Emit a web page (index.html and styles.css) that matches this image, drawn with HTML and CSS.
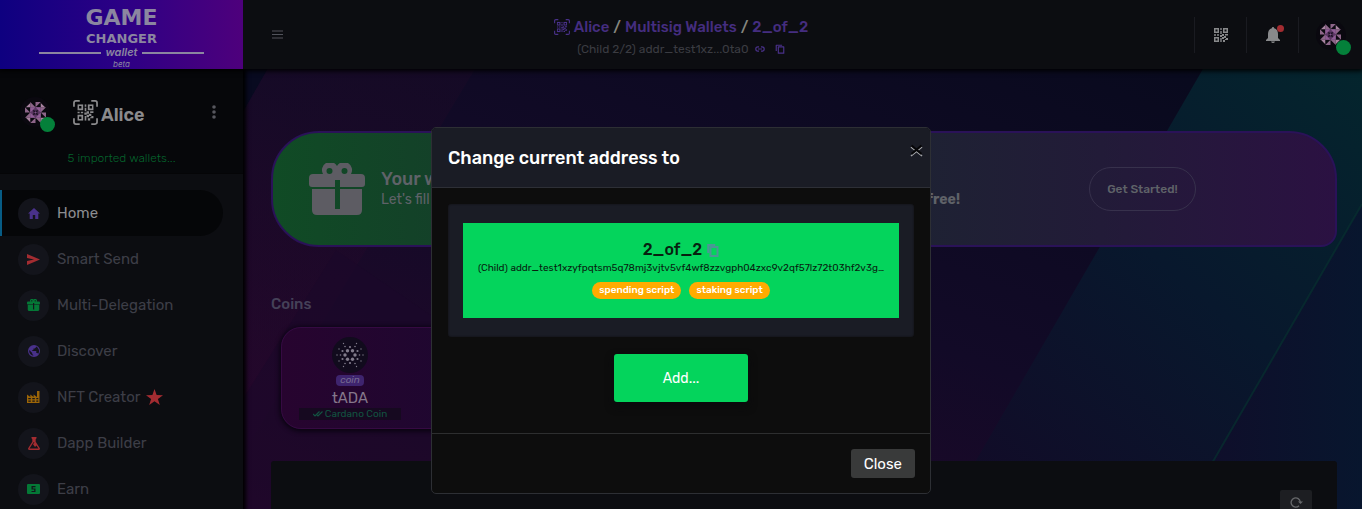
FILE: index.html
```html
<!DOCTYPE html>
<html lang="en">
<head>
<meta charset="utf-8">
<title>GameChanger Wallet</title>
<link rel="stylesheet" href="styles.css">
</head>
<body>
<svg class="defs" aria-hidden="true">
  <symbol id="qr" viewBox="0 0 14 14">
    <path fill-rule="evenodd" d="M0 0h5v5H0zM1.500 1.500v2h2v-2zM9 0h5v5H9zM10.500 1.500v2h2v-2zM0 9h5v5H0zM1.500 10.500v2h2v-2zM6.300 0h1.400v2H6.300zM6.300 3h1.400v3H6.300zM0 6.300h2v1.400H0zM3 6.300h2v1.400H3zM6 7h2v2H6zM8 6h2v2H8zM11 6h3v1.500h-3zM10 8h2v2h-2zM12 10h2v2h-2zM8 9h2v2H8zM6.300 10h1.400v4H6.300zM9 12h2v2H9zM11 11h1v1h-1z"/>
  </symbol>
  <symbol id="scan" viewBox="0 0 26 26">
    <path d="M1 7V3q0-2 2-2h4M19 1h4q2 0 2 2v4M25 19v4q0 2-2 2h-4M7 25H3q-2 0-2-2v-4" fill="none" stroke="currentColor" stroke-width="1.800"/>
    <use href="#qr" x="4.500" y="4.500" width="17" height="17"/>
  </symbol>
  <symbol id="avatar" viewBox="0 0 24 24">
    <path fill="#5b3763" d="M6 6h12v12H6z"/>
    <path fill="#8d6589" d="M6 0l6 6H6zM12 0h6l-6 6zM24 6l-6 6V6zM24 12v6l-6-6zM18 24l-6-6h6zM12 24H6l6-6zM0 18l6-6v6zM0 12V6l6 6z"/>
    <path fill="#a883a0" d="M6 6V1L1 6zM18 6h5l-5-5zM18 18v5l5-5zM6 18H1l5 5z"/>
    <path fill="#8f5d95" d="M6 6h6l-6 6zM18 6v6l-6-6zM18 18h-6l6-6zM6 18v-6l6 6z"/>
    <path fill="#1b1023" d="M9 9l3 1 3-1-1 3 1 3-3-1-3 1 1-3z"/>
    <path fill="#80558a" d="M12 10.500l1.500 1.500-1.500 1.500-1.500-1.500z"/>
  </symbol>
  <symbol id="gift" viewBox="0 0 56 52">
    <path fill-rule="evenodd" d="M4 11h10a8 8 0 0 1 14-8 8 8 0 0 1 14 8h10q4 0 4 4v6q0 3-3 3H31v-7h-5v7H3q-3 0-3-3v-6q0-4 4-4zM20.500 5a3 3 0 1 0 0 6 3 3 0 0 0 0-6zM35.500 5a3 3 0 1 0 0 6 3 3 0 0 0 0-6z"/>
    <path d="M3 26h23v20h5V26h22v21q0 5-5 5H8q-5 0-5-5z"/>
  </symbol>
  <symbol id="copy" viewBox="0 0 12 12">
    <path d="M4 3.500h6.500V11H4zM1.500 8.500v-7h7" fill="none" stroke="currentColor" stroke-width="1.400" stroke-linejoin="round"/>
  </symbol>
</svg>

<header class="topbar">
  <div class="topbar-left">
    <a class="brand" href="#" aria-label="GameChanger wallet beta">
      <span class="brand-game">GAME</span>
      <span class="brand-changer">CHANGER</span>
      <span class="brand-wallet">wallet</span>
      <span class="brand-beta">beta</span>
    </a>
    <button class="plain menu" aria-label="Toggle menu"><svg width="11" height="9" viewBox="0 0 11 9"><path d="M0 1h11M0 4.500h11M0 8h11" stroke="currentColor"/></svg></button>
  </div>
  <div class="crumbs">
    <div class="crumb-line">
      <svg class="violet" width="16" height="16"><use href="#scan"/></svg>
      <a href="#">Alice</a><span>/</span><a href="#">Multisig Wallets</a><span>/</span><a href="#">2_of_2</a>
    </div>
    <div class="crumb-sub">(Child 2/2) addr_test1xz...0ta0
      <svg class="violet" width="10" height="6" viewBox="0 0 10 6"><path d="M4 .8H3a2.200 2.200 0 0 0 0 4.400h1M6 .8h1a2.200 2.200 0 0 1 0 4.400H6M3 3h4" fill="none" stroke="currentColor" stroke-width="1.200"/></svg>
      <button class="plain violet" aria-label="Copy address"><svg width="10" height="10"><use href="#copy"/></svg></button>
    </div>
  </div>
  <div class="tools">
    <button class="plain tool" aria-label="Scan QR"><svg width="14" height="14"><use href="#qr"/></svg></button>
    <button class="plain tool" aria-label="Notifications"><span class="bell"><svg width="14" height="16" viewBox="0 0 14 16"><path d="M7 0q1.200 0 1.200 1.300Q12 2.500 12 7v4l2 2v1H0v-1l2-2V7q0-4.500 3.800-5.700Q5.800 0 7 0zM5 14.500h4Q8.500 16 7 16t-2-1.500z"/></svg><i class="alert"></i></span></button>
    <button class="plain tool tool-user" aria-label="Account"><span class="avatar"><svg width="21" height="21"><use href="#avatar"/></svg><i class="online"></i></span></button>
  </div>
</header>

<div class="shell">
  <aside class="sidebar">
    <section class="profile">
      <div class="profile-row">
        <span class="avatar"><svg width="21" height="21"><use href="#avatar"/></svg><i class="online"></i></span>
        <h2><svg width="25" height="25"><use href="#scan"/></svg><span>Alice</span></h2>
        <button class="plain more" aria-label="More"><svg width="4" height="14" viewBox="0 0 4 14"><circle cx="2" cy="2" r="1.800"/><circle cx="2" cy="7" r="1.800"/><circle cx="2" cy="12" r="1.800"/></svg></button>
      </div>
      <a class="imported" href="#">5 imported wallets...</a>
    </section>
    <nav>
      <a class="item active" href="#"><span class="dot violet"><svg width="12" height="11" viewBox="0 0 12 11"><path d="M6 0l6 5.500h-1.700V11H7.200V7H4.800v4H1.700V5.500H0z"/></svg></span>Home</a>
      <a class="item" href="#"><span class="dot red"><svg width="13" height="11" viewBox="0 0 13 11"><path d="M0 0l13 5.500L0 11V7l7-1.500L0 4z"/></svg></span>Smart Send</a>
      <a class="item" href="#"><span class="dot green"><svg width="13" height="12"><use href="#gift"/></svg></span>Multi-Delegation</a>
      <a class="item" href="#"><span class="dot violet"><svg width="12" height="12" viewBox="0 0 12 12"><path fill-rule="evenodd" d="M6 0a6 6 0 1 1 0 12A6 6 0 0 1 6 0zM1.300 5l2.900 3v1l1 1v.8A5 5 0 0 1 1.300 5zM8 1.500v.8L6.800 3.500H5.500v1.200L4.300 5v1h4v2h1.200l.6 1A5 5 0 0 0 8 1.500z"/></svg></span>Discover</a>
      <a class="item" href="#"><span class="dot amber"><svg width="13" height="12" viewBox="0 0 13 12"><path fill-rule="evenodd" d="M0 3.500L3.300 6V3.500L6.600 6V3.500L10 6V0h2.500v12H0zM1.300 7v1.200h2.500V7zm4 0v1.200h2.500V7zm4 0v1.200h2V7zm-8 2.500v1.200h2.500V9.500zm4 0v1.200h2.500V9.500zm4 0v1.200h2V9.500z"/></svg></span>NFT Creator<svg class="star" width="17" height="16" viewBox="0 0 16 15"><path d="M8 0l2 5.600 6 .2-4.800 3.600L13 15l-5-3.400L3 15l1.800-5.600L0 5.800l6-.2z"/></svg></a>
      <a class="item" href="#"><span class="dot red"><svg width="12" height="13" viewBox="0 0 12 13"><path fill-rule="evenodd" d="M3.500 0h5v1.300l-.8 1v2.500L12 11.500q0 1.500-1.500 1.500h-9Q0 13 0 11.500l4.300-6.700V2.300l-.8-1zM5.500 5.200L1.500 11.600h9l-2-3.200L7 10 5 7.300l1.500-2z"/></svg></span>Dapp Builder</a>
      <a class="item" href="#"><span class="dot green"><svg width="13" height="10" viewBox="0 0 13 10"><path fill-rule="evenodd" d="M1 0h11q1 0 1 1v8q0 1-1 1H1Q0 10 0 9V1q0-1 1-1zM4.500 2v3.500h2.700V7H4.500v1h4V4.600H5.800V3.200h2.700V2z"/></svg></span>Earn</a>
    </nav>
  </aside>

  <main>
    <svg class="backdrop" viewBox="0 0 1119 440" preserveAspectRatio="xMaxYMin slice" aria-hidden="true">
      <defs>
        <linearGradient id="base" x1="1" y1="0" x2="0" y2="1"><stop offset="0" stop-color="#070a1c"/><stop offset=".5" stop-color="#120a27"/><stop offset="1" stop-color="#27072b"/></linearGradient>
        <linearGradient id="teal" x1="1" y1="0" x2=".2" y2="1"><stop offset="0" stop-color="#04252d"/><stop offset=".5" stop-color="#08182d"/><stop offset="1" stop-color="#110c28"/></linearGradient>
        <linearGradient id="wine" x1="0" y1="0" x2="0" y2="1"><stop offset="0" stop-color="#1a0a26"/><stop offset="1" stop-color="#29062d"/></linearGradient>
        <linearGradient id="navy" x1="0" y1="0" x2="1" y2="0"><stop offset="0" stop-color="#100d2a"/><stop offset="1" stop-color="#08162e"/></linearGradient>
      </defs>
      <rect width="1119" height="440" fill="url(#base)"/>
      <path d="M0 0h32L0 56z" fill="#080a20"/>
      <path d="M32 0h206L0 395V56z" fill="url(#wine)" opacity=".5"/>
      <path d="M100 180L0 340v100h170l90-150z" fill="#1b0929" opacity=".6"/>
      <path d="M961 0h158v440H706z" fill="url(#teal)"/>
      <path d="M1119 134v306H942z" fill="url(#navy)"/>
      <path d="M1119 134L942 440" stroke="#07302f" stroke-width="2" opacity=".7"/>
    </svg>
    <div class="content">
      <section class="banner">
        <svg class="banner-gift" width="56" height="52"><use href="#gift"/></svg>
        <div class="banner-text">
          <h3>Your wallet is empty!</h3>
          <p><span>Let's fill it with some test coins, you can get them</span><b>for free!</b></p>
        </div>
        <button class="started">Get Started!</button>
      </section>
      <h4>Coins</h4>
      <section class="coins">
        <div class="coin">
          <span class="coin-logo"><svg width="28" height="28" viewBox="-14 -14 28 28">
            <g><circle cx="5" cy="0" r="1.700"/><circle cx="2.500" cy="4.300" r="1.700"/><circle cx="-2.500" cy="4.300" r="1.700"/><circle cx="-5" cy="0" r="1.700"/><circle cx="-2.500" cy="-4.300" r="1.700"/><circle cx="2.500" cy="-4.300" r="1.700"/></g>
            <g><circle cx="7.500" cy="4" r="1.100"/><circle cx="0" cy="8" r="1.100"/><circle cx="-7.500" cy="4" r="1.100"/><circle cx="-7.500" cy="-4" r="1.100"/><circle cx="0" cy="-8" r="1.100"/><circle cx="7.500" cy="-4" r="1.100"/><circle cx="9.500" cy="0" r=".8"/><circle cx="-9.500" cy="0" r=".8"/><circle cx="5" cy="8.500" r=".8"/><circle cx="-5" cy="8.500" r=".8"/><circle cx="5" cy="-8.500" r=".8"/><circle cx="-5" cy="-8.500" r=".8"/><circle cx="13" cy="0" r=".7"/><circle cx="-13" cy="0" r=".7"/><circle cx="6.500" cy="11.500" r=".7"/><circle cx="-6.500" cy="11.500" r=".7"/><circle cx="6.500" cy="-11.500" r=".7"/><circle cx="-6.500" cy="-11.500" r=".7"/><circle cx="11" cy="6" r=".7"/><circle cx="-11" cy="6" r=".7"/><circle cx="11" cy="-6" r=".7"/><circle cx="-11" cy="-6" r=".7"/></g>
          </svg></span>
          <span class="coin-tag">coin</span>
          <span class="coin-name">tADA</span>
          <span class="coin-kind"><svg width="10" height="6" viewBox="0 0 10 6"><path d="M0 3l2 2 4.500-4.500M4 4l1 1L9.500.5" fill="none" stroke="currentColor" stroke-width="1.200"/></svg>Cardano Coin</span>
        </div>
      </section>
      <section class="panel">
        <button class="refresh" aria-label="Refresh"><svg width="13" height="12" viewBox="0 0 13 12"><path d="M9 9.700A4.600 4.600 0 1 1 10.300 6" fill="none" stroke="currentColor" stroke-width="1.300"/><path d="M8 5.500h5L10.500 8z" fill="currentColor"/></svg></button>
      </section>
    </div>
  </main>
</div>

<div class="overlay">
  <section class="modal" role="dialog" aria-modal="true" aria-labelledby="modal-title">
    <header class="modal-head">
      <h1 id="modal-title">Change current address to</h1>
      <button class="plain dismiss" aria-label="Dismiss"><svg width="13" height="13" viewBox="0 0 13 13"><path d="M1 3l11 9M12 3l-11 9" stroke="#a3a4a8" stroke-width="1.600"/><path d="M1.500 1.500l10 8.500M11.500 1.500l-10 8.500" stroke="#050507" stroke-width="2.200"/></svg></button>
    </header>
    <div class="modal-body">
      <div class="choices">
        <button class="address">
          <span class="address-name">2_of_2 <svg width="12" height="13" viewBox="0 0 12 13"><path d="M3.500 3h7v9h-7zM1.200 9V1h7" fill="none" stroke="currentColor" stroke-width="2"/></svg></span>
          <span class="address-line">(Child) addr_test1xzyfpqtsm5q78mj3vjtv5vf4wf8zzvgph04zxc9v2qf57lz72t03hf2v3g…</span>
          <span class="badges"><span class="badge">spending script</span><span class="badge">staking script</span></span>
        </button>
      </div>
      <button class="add">Add...</button>
    </div>
    <footer class="modal-foot"><button class="close">Close</button></footer>
  </section>
</div>
</body>
</html>
```
FILE: styles.css
```css
* { box-sizing: border-box; }
body {
  margin: 0;
  height: 100vh;
  overflow: hidden;
  display: flex;
  flex-direction: column;
  background: #0c0d11;
  color: #77787c;
  font-family: Rubik, Inter, "Liberation Sans", sans-serif;
  font-size: 15px;
}
h1, h2, h3, h4, p { margin: 0; }
a { color: inherit; text-decoration: none; }
button { font: inherit; color: inherit; cursor: pointer; }
svg { display: block; fill: currentColor; flex: none; }
.defs { position: absolute; width: 0; height: 0; }
.plain { background: none; border: 0; padding: 0; }
.violet { color: #49318a; }
.red { color: #a32c31; }
.green { color: #047836; }
.amber { color: #9c6507; }

.topbar {
  position: relative;
  z-index: 2;
  flex: none;
  display: grid;
  grid-template-columns: 1fr auto 1fr;
  height: 69px;
  background: #0c0d11;
  box-shadow: 0 1px 5px 1px #000;
}
.topbar-left { display: flex; align-items: center; gap: 29px; }
.brand {
  width: 243px;
  height: 69px;
  padding: 5px 39px 0;
  display: flex;
  flex-direction: column;
  align-items: center;
  background: linear-gradient(90deg, #0e0080, #2c0085 50%, #4e007c);
  color: #8b86a0;
  font-family: "DejaVu Sans", sans-serif;
}
.brand-game { font-size: 22px; line-height: 26px; font-weight: 700; }
.brand-changer { font-size: 13px; line-height: 15px; font-weight: 700; }
.brand-wallet {
  align-self: stretch;
  display: flex;
  align-items: center;
  gap: 4px;
  font: italic 600 11px/13px Inter, sans-serif;
}
.brand-wallet::before, .brand-wallet::after { content: ""; flex: 1; height: 2px; background: currentColor; }
.brand-beta { font: italic 8px/10px Inter, sans-serif; }
.menu { color: #52535b; }

.crumbs { display: flex; flex-direction: column; align-items: center; justify-content: center; gap: 5px; padding-top: 5px; }
.crumb-line { display: flex; align-items: center; gap: 4px; font-size: 15px; line-height: 18px; font-weight: 500; }
.crumb-line a { color: #452d80; }
.crumb-line span { color: #85867f; }
.crumb-sub { display: flex; align-items: center; gap: 6px; font-size: 12px; line-height: 16px; color: #3b3c42; }
.crumb-sub button { margin-left: 4px; }
.tools { display: flex; justify-content: flex-end; align-items: center; }
.tool { width: 52px; height: 36px; display: grid; place-items: center; border-left: 1px solid #1a1b21; color: #88898b; }
.tool-user { width: 64px; }
.bell { position: relative; }
.alert { position: absolute; top: -2px; right: -4px; width: 7px; height: 7px; border-radius: 50%; background: #a32c31; }
.avatar { position: relative; width: 30px; height: 30px; display: grid; place-items: center; border-radius: 50%; background: #0a080f; }
.online { position: absolute; right: -5px; bottom: -5px; width: 15px; height: 15px; border-radius: 50%; background: #04803a; }

.shell { flex: 1; min-height: 0; display: grid; grid-template-columns: 243px 1fr; }
.sidebar { position: relative; z-index: 1; background: #0c0d11; box-shadow: 2px 0 4px 1px #000; }
.profile { height: 105px; padding-top: 26px; background: #06070a; border-bottom: 1px solid #050507; display: flex; flex-direction: column; align-items: center; }
.profile-row { align-self: stretch; display: flex; align-items: center; padding: 0 27px 0 20px; height: 34px; }
.profile-row h2 { display: flex; align-items: center; gap: 3px; margin: 0 auto 0 23px; font-size: 18px; line-height: 24px; font-weight: 600; color: #8b8b8d; }
.profile-row h2 span { padding-top: 5px; }
.more { color: #56575e; }
.imported { margin-top: 21px; font-size: 12px; line-height: 16px; font-weight: 300; color: #05632c; }
nav { padding-top: 16px; }
.item { display: flex; align-items: center; gap: 8px; width: 223px; height: 46px; padding-left: 16px; border-left: 2px solid transparent; color: #3d3e47; }
.item.active { background: #050608; border-left-color: #075c85; border-radius: 0 23px 23px 0; color: #8c8d90; }
.dot { width: 31px; height: 31px; display: grid; place-items: center; border-radius: 50%; background: #13141b; }
.star { color: #a32c31; margin-left: -3px; }

main { position: relative; min-width: 0; overflow: hidden; }
.backdrop { position: absolute; inset: 0; width: 100%; height: 100%; }
.content { position: relative; height: 100%; padding: 62px 25px 0 28px; display: flex; flex-direction: column; }
.banner {
  flex: none;
  height: 116px;
  padding: 0 139px 0 36px;
  display: flex;
  align-items: center;
  border: 2px solid #2a1258;
  border-radius: 48px 48px 16px 48px;
  background: linear-gradient(90deg, #104b25, #1e2233 60%, #221b38 78%, #2b1142);
  color: #5f6268;
}
.banner-gift { color: #5d5c63; }
.banner-text { flex: 1; margin-left: 16px; white-space: nowrap; }
.banner-text h3 { font-size: 18px; line-height: 22px; font-weight: 500; }
.banner-text p { display: flex; gap: 4px; width: 579px; justify-content: space-between; font-size: 14px; line-height: 20px; }
.started { width: 107px; height: 44px; padding: 0; border: 1px solid #37314c; border-radius: 22px; background: none; font-size: 12px; font-weight: 500; }
h4 { margin: 47px 0 13px; font-size: 15px; line-height: 20px; font-weight: 500; color: #454158; }
.coins { margin: 0 10px; max-width: 600px; height: 102px; flex: none; border: 1px solid #350a42; border-radius: 20px; background: linear-gradient(90deg, #27042f, #180930 50%, #150a2a); box-shadow: 0 1px 5px 1px #07030d; }
.coin { width: 136px; padding-top: 9px; display: flex; flex-direction: column; align-items: center; }
.coin-logo { width: 36px; height: 36px; display: grid; place-items: center; border-radius: 50%; background: #110b1d; color: #817b8b; }
.coin-tag { margin-top: 2px; padding: 0 4px; border-radius: 4px; background: #3e246e; color: #776b91; font-size: 10px; line-height: 11px; font-style: italic; }
.coin-name { font-size: 15px; line-height: 20px; margin-top: 2px; color: #85778b; }
.coin-kind { display: flex; justify-content: center; align-items: center; gap: 2px; width: 102px; background: #160920; color: #125341; font-size: 10px; line-height: 12px; }
.panel { flex: 1; margin-top: 32px; padding: 29px 25px 0 0; display: flex; justify-content: flex-end; align-items: flex-start; background: #0c0d11; border-radius: 3px; }
.refresh { width: 32px; height: 24px; display: grid; place-items: center; border: 0; border-radius: 2px; background: #1d1e22; color: #67686b; }

.overlay { position: fixed; inset: 0; z-index: 5; display: flex; justify-content: center; align-items: flex-start; padding-top: 127px; }
.modal { width: 500px; border: 1px solid #2d2f34; border-radius: 5px; background: #0d0d0d; overflow: hidden; }
.modal-head { display: flex; justify-content: space-between; align-items: flex-start; height: 60px; padding: 16px 7px 0 16px; border-bottom: 1px solid #2d2f36; background: #1a1c25; }
h1 { font-size: 18px; line-height: 28px; font-weight: 500; color: #fff; }
.modal-body { padding: 16px 16px 31px; display: flex; flex-direction: column; align-items: center; gap: 17px; }
.choices { align-self: stretch; padding: 19px 15px; border-radius: 3px; background: #1a1c25; box-shadow: inset 0 0 2px #0d0d0d; }
.address { width: 100%; height: 95px; padding: 16px 12px; display: flex; flex-direction: column; align-items: center; border: 0; background: #04d45c; color: #07200f; }
.address-name { display: flex; align-items: center; gap: 5px; font-size: 16px; line-height: 22px; font-weight: 500; }
.address-name svg { color: #4c9795; }
.address-line { max-width: 100%; overflow: hidden; white-space: nowrap; font-size: 10px; line-height: 14px; }
.badges { display: flex; gap: 8px; margin-top: 7px; }
.badge { padding: 0 7px; border-radius: 9px; background: #ffab00; color: #fff; font-size: 10px; line-height: 17px; font-weight: 500; }
.add { width: 134px; height: 48px; border: 0; border-radius: 3px; background: #04d45c; color: #fff; font-size: 14px; box-shadow: 0 4px 8px #0a0a0d; }
.modal-foot { display: flex; justify-content: flex-end; padding: 15px; border-top: 1px solid #2d2e2f; }
.close { height: 29px; padding: 0 13px; border: 0; border-radius: 3px; background: #393a3a; color: #fff; }
```
